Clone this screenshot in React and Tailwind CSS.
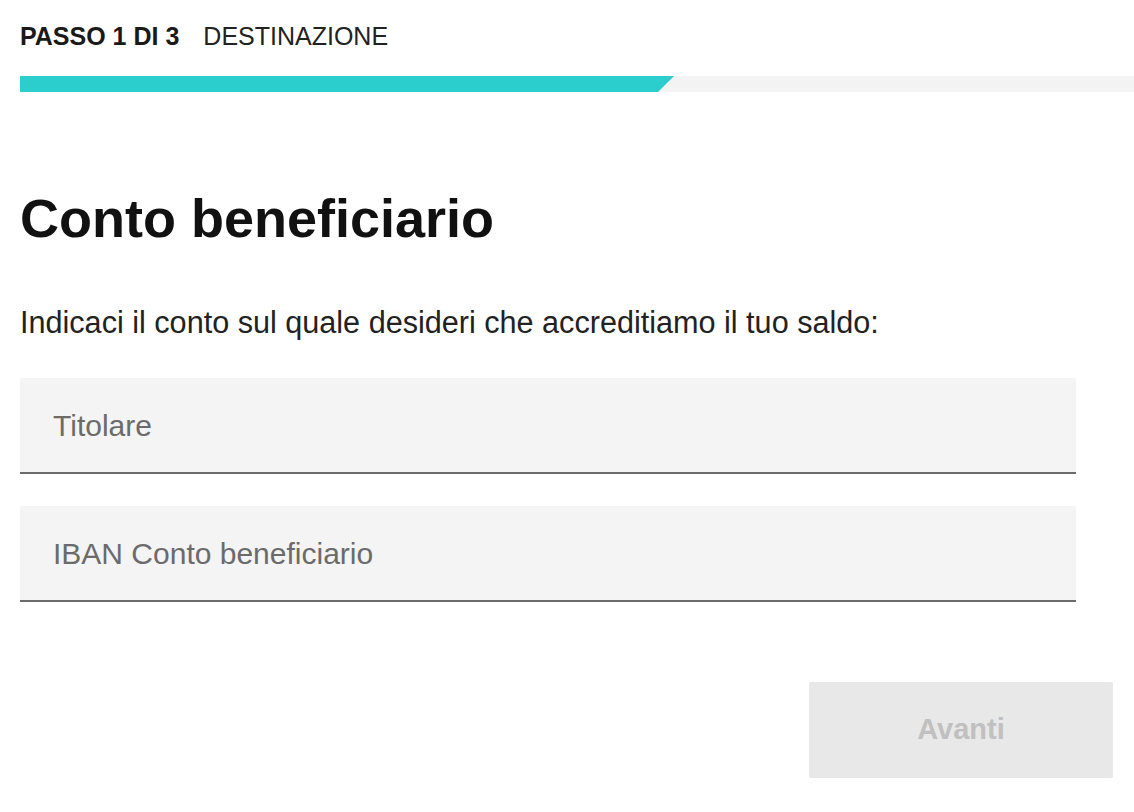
import React, { useState } from "react";

// Step 1 of the transfer flow: beneficiary account form
const fields = [
  { name: "holder", label: "Titolare" },
  { name: "iban", label: "IBAN Conto beneficiario" },
];

const App = () => {
  const [values, setValues] = useState({ holder: "", iban: "" });
  const canContinue = values.holder.trim() && values.iban.trim();

  return (
    <div className="min-h-screen bg-white pt-[20px] pl-[20px] font-['Liberation_Sans',Arial,sans-serif] text-[#151515]">
      <div className="flex items-center h-[32px] text-[25px] leading-[32px]">
        <span className="font-bold text-[#1a1a1a]">PASSO 1 DI 3</span>
        <span className="ml-[24px] text-[#222]">DESTINAZIONE</span>
      </div>

      <div className="mt-[24px] h-[16px] bg-[#f3f3f3]">
        <div className="h-full w-[654px] bg-[#2ccdcd] [clip-path:polygon(0_0,100%_0,calc(100%-16px)_100%,0_100%)]" />
      </div>

      <h1 className="mt-[96px] text-[54px] leading-[60px] font-bold text-[#111]">
        Conto beneficiario
      </h1>

      <p className="mt-[56px] text-[30.6px] leading-[36px] text-[#222]">
        Indicaci il conto sul quale desideri che accreditiamo il tuo saldo:
      </p>

      <div className="mt-[38px] flex flex-col gap-[32px] w-[1056px]">
        {fields.map((f) => (
          <input
            key={f.name}
            value={values[f.name]}
            onChange={(e) => setValues({ ...values, [f.name]: e.target.value })}
            placeholder={f.label}
            className="h-[96px] w-full rounded-t-[2px] bg-[#f4f4f4] border-b-2 border-[#6b6b6b] pl-[33px] pt-[2px] text-[30px] text-[#222] placeholder:text-[#6b6b6b] outline-none"
          />
        ))}
      </div>

      <div className="flex justify-end mt-[80px] pr-[21px]">
        <button
          disabled={!canContinue}
          className="w-[304px] h-[96px] rounded-[2px] bg-[#e8e8e8] text-[29px] font-bold text-[#c0c0c0]"
        >
          Avanti
        </button>
      </div>
    </div>
  );
};

export default App;
